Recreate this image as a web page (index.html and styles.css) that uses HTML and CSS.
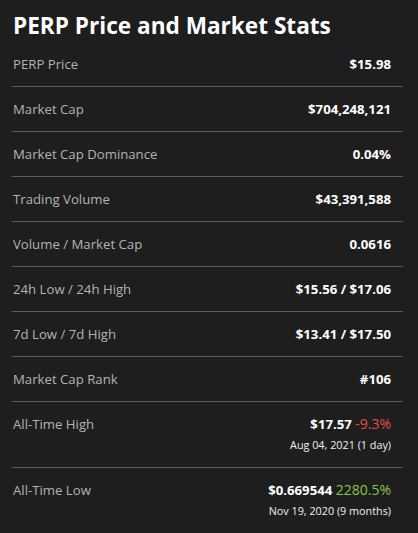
FILE: index.html
```html
<!DOCTYPE html>
<html>
<head>
<meta charset="utf-8">
<link rel="stylesheet" href="styles.css">
</head>
<body>
<div class="stats">
  <h2 class="title">PERP Price and Market Stats</h2>
  <div class="row"><span class="label">PERP Price</span><div class="val"><span class="main">$15.98</span></div></div>
  <div class="row"><span class="label">Market Cap</span><div class="val"><span class="main">$704,248,121</span></div></div>
  <div class="row"><span class="label">Market Cap Dominance</span><div class="val"><span class="main">0.04%</span></div></div>
  <div class="row"><span class="label">Trading Volume</span><div class="val"><span class="main">$43,391,588</span></div></div>
  <div class="row"><span class="label">Volume / Market Cap</span><div class="val"><span class="main">0.0616</span></div></div>
  <div class="row"><span class="label">24h Low / 24h High</span><div class="val"><span class="main">$15.56 / $17.06</span></div></div>
  <div class="row"><span class="label">7d Low / 7d High</span><div class="val"><span class="main">$13.41 / $17.50</span></div></div>
  <div class="row"><span class="label">Market Cap Rank</span><div class="val"><span class="main">#106</span></div></div>
  <div class="row"><span class="label">All-Time High</span><div class="val"><span class="main">$17.57 <span class="down">-9.3%</span></span><span class="date">Aug 04, 2021 (1 day)</span></div></div>
  <div class="row last"><span class="label">All-Time Low</span><div class="val"><span class="main">$0.669544 <span class="up">2280.5%</span></span><span class="date">Nov 19, 2020 (9 months)</span></div></div>
</div>
</body>
</html>
```
FILE: styles.css
```css
html, body {
  margin: 0;
  background: #1e1e1e;
}
body {
  font-family: "Open Sans", "Noto Sans", sans-serif;
  color: #fff;
}
.stats {
  padding: 0 15px 0 12px;
}
.title {
  margin: 0;
  padding: 10px 0 0 1px;
  font-size: 22.6px;
  line-height: 32px;
  font-weight: 700;
}
.row {
  display: flex;
  justify-content: space-between;
  align-items: flex-start;
  padding: 12px 12px 12px 1px;
  border-bottom: 1px solid #5a5a5a;
  font-size: 13.2px;
  line-height: 20px;
}
.row.last {
  border-bottom: none;
}
.label {
  color: #b3b3b3;
}
.val {
  display: flex;
  flex-direction: column;
  align-items: flex-end;
}
.main {
  font-weight: 700;
}
.down {
  color: #e0504a;
  font-weight: 400;
  font-size: 14px;
}
.up {
  color: #8bc34a;
  font-weight: 400;
  font-size: 14px;
}
.date {
  font-size: 10.8px;
  line-height: 21px;
  color: #f0f0f0;
}
```
